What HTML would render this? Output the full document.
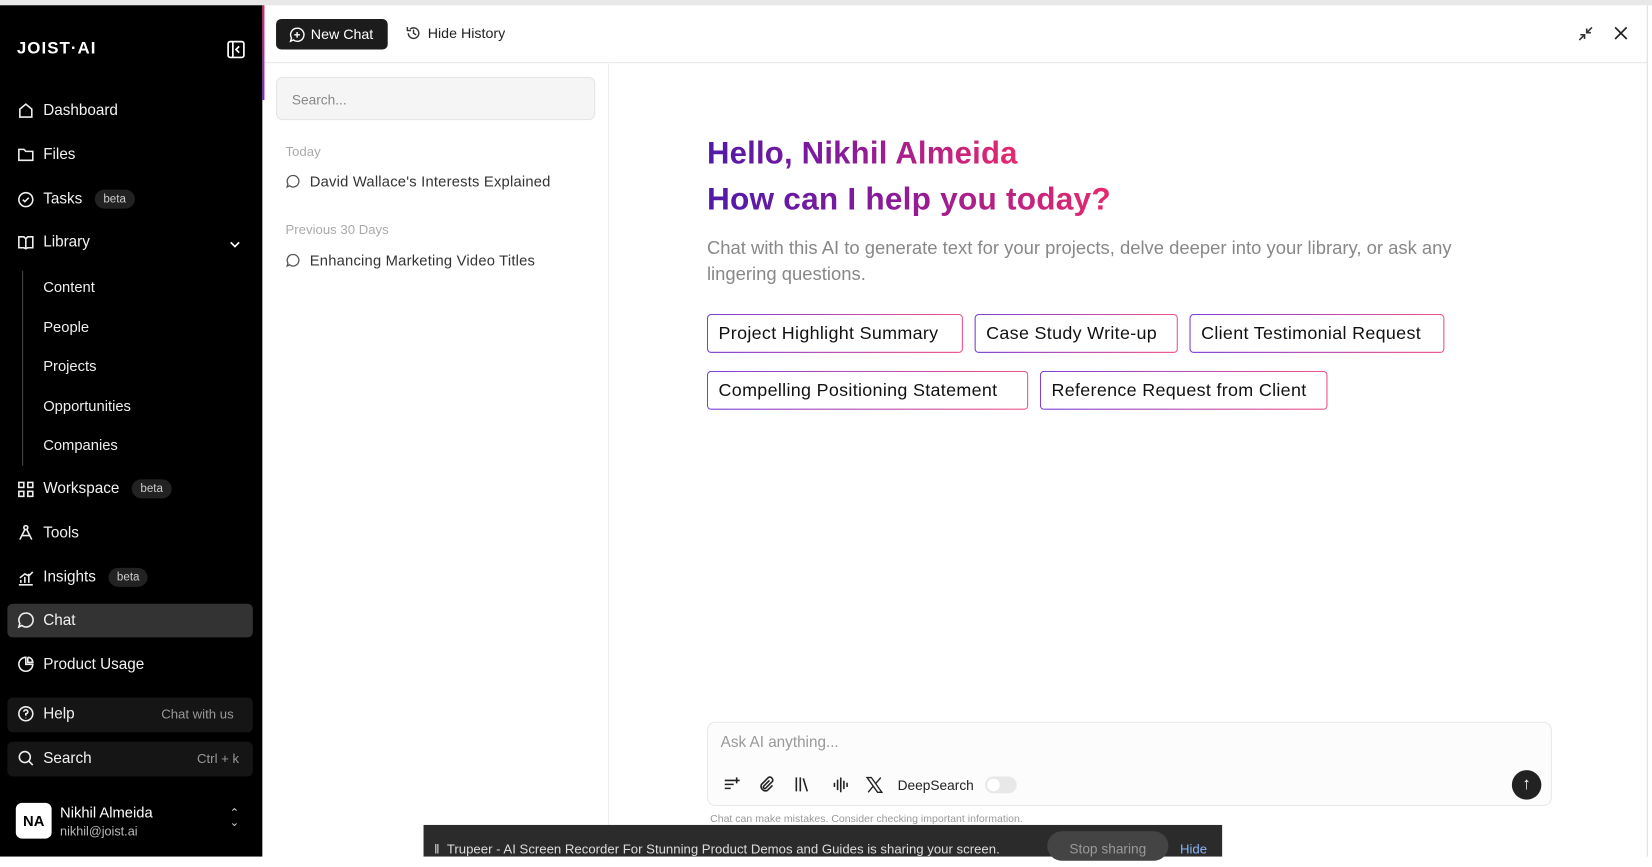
<!DOCTYPE html>
<html><head><meta charset="utf-8"><style>
*{box-sizing:border-box;margin:0;padding:0}
html,body{width:1652px;height:856px;overflow:hidden;background:#fff;font-family:"Liberation Sans",sans-serif}
#w{position:absolute;left:0;top:0;width:1568px;height:813px;transform:scale(1.05357);transform-origin:0 0;background:#fff}
.a{position:absolute}
.sb{left:0;top:5px;width:249px;height:808px;background:#000;color:#fff}
.ni{position:absolute;left:16px;font-size:14.5px;display:flex;align-items:center;gap:8px;color:#f2f2f2}
.ni svg{width:17px;height:17px;stroke:#eee;fill:none;stroke-width:1.6}
.beta{background:#222;color:#ccc;font-size:11px;border-radius:10px;padding:3px 8px;margin-left:4px}
.sub{position:absolute;left:41px;font-size:14px;color:#eee}
.chip{position:absolute;height:37px;border:1.5px solid transparent;background:linear-gradient(#fff,#fff) padding-box,linear-gradient(90deg,#7a3fd6,#f0528a) border-box;font-size:17px;letter-spacing:0.3px;color:#111;display:flex;align-items:center;padding-left:10px;border-radius:4px}
.gt{background:linear-gradient(90deg,#4f1aa8,#8a1a9a 45%,#e8286c);-webkit-background-clip:text;background-clip:text;color:transparent;font-weight:bold;font-size:29.5px;letter-spacing:0.2px}
</style></head><body><div id="w">
<div class="a" style="left:0;top:0;width:1568px;height:5px;background:#e8e8e8"></div>
<div class="a sb">
 <div class="a" style="left:16px;top:33px;font-size:16px;font-weight:bold;letter-spacing:1px">JOIST·AI</div>
 <svg class="a" style="left:215px;top:33px" width="18" height="18" viewBox="0 0 18 18" fill="none" stroke="#fff" stroke-width="1.6"><rect x="1.5" y="1.5" width="15" height="15" rx="2"/><path d="M6 2v14M12 6l-3 3 3 3"/></svg>
 <div class="ni" style="top:91px"><svg viewBox="0 0 18 18"><path d="M3 8l6-5 6 5v8H3z"/></svg>Dashboard</div>
 <div class="ni" style="top:133px"><svg viewBox="0 0 18 18"><path d="M2 4h5l2 2h7v9H2z"/></svg>Files</div>
 <div class="ni" style="top:175px"><svg viewBox="0 0 18 18"><circle cx="9" cy="9" r="7"/><path d="M6 9l2 2 4-4"/></svg>Tasks<span class="beta">beta</span></div>
 <div class="ni" style="top:216px"><svg viewBox="0 0 18 18"><path d="M2 4h5l2 2 2-2h5v11h-5l-2 1-2-1H2z M9 6v10"/></svg>Library</div>
 <svg class="a" style="left:217px;top:221px" width="12" height="12" viewBox="0 0 12 12" fill="none" stroke="#fff" stroke-width="1.6"><path d="M2 4l4 4 4-4"/></svg>
 <div class="a" style="left:21px;top:252px;width:1px;height:185px;background:#444"></div>
 <div class="sub" style="top:259px">Content</div>
 <div class="sub" style="top:297px">People</div>
 <div class="sub" style="top:334px">Projects</div>
 <div class="sub" style="top:372px">Opportunities</div>
 <div class="sub" style="top:409px">Companies</div>
 <div class="ni" style="top:450px"><svg viewBox="0 0 18 18"><rect x="2" y="2" width="5" height="5"/><rect x="11" y="2" width="5" height="5"/><rect x="2" y="11" width="5" height="5"/><rect x="11" y="11" width="5" height="5"/></svg>Workspace<span class="beta">beta</span></div>
 <div class="ni" style="top:492px"><svg viewBox="0 0 18 18"><circle cx="9" cy="4" r="2"/><path d="M8 6l-5 10M10 6l5 10M5 12h8"/></svg>Tools</div>
 <div class="ni" style="top:534px"><svg viewBox="0 0 18 18"><path d="M2 16h14M4 14v-3M8 14V8M12 14V5M3 9l5-4 4 2 4-4"/></svg>Insights<span class="beta">beta</span></div>
 <div class="a" style="left:7px;top:568px;width:233px;height:32px;background:#333;border-radius:5px"></div>
 <div class="ni" style="top:575px"><svg viewBox="0 0 18 18"><path d="M9 2a7 7 0 1 1-4 12.5L2 16l1-3.5A7 7 0 0 1 9 2z"/></svg>Chat</div>
 <div class="ni" style="top:617px"><svg viewBox="0 0 18 18"><path d="M9 2a7 7 0 1 0 7 7H9z M11 2v5h5a5 5 0 0 0-5-5"/></svg>Product Usage</div>
 <div class="a" style="left:7px;top:657px;width:233px;height:33px;background:#151515;border-radius:5px"></div>
 <div class="ni" style="top:664px"><svg viewBox="0 0 18 18"><circle cx="9" cy="9" r="7"/><path d="M7 7a2 2 0 1 1 2 2v2M9 13v.5"/></svg>Help</div>
 <div class="a" style="left:153px;top:666px;font-size:12.5px;color:#999">Chat with us</div>
 <div class="a" style="left:7px;top:699px;width:233px;height:33px;background:#151515;border-radius:5px"></div>
 <div class="ni" style="top:706px"><svg viewBox="0 0 18 18"><circle cx="8" cy="8" r="5.5"/><path d="M12 12l4 4"/></svg>Search</div>
 <div class="a" style="left:187px;top:708px;font-size:12.5px;color:#999">Ctrl + k</div>
 <div class="a" style="left:15px;top:757px;width:34px;height:34px;background:#fff;border-radius:6px;color:#000;font-size:14px;font-weight:bold;display:flex;align-items:center;justify-content:center">NA</div>
 <div class="a" style="left:57px;top:758px;font-size:14px">Nikhil Almeida</div>
 <div class="a" style="left:57px;top:777px;font-size:12px;color:#bbb">nikhil@joist.ai</div>
 <div class="a" style="left:218px;top:763px;font-size:11px;line-height:9px;color:#ccc">⌃<br>⌄</div>
</div>
<div class="a" style="left:249px;top:5px;width:2px;height:90px;background:linear-gradient(#e0246c,#7a2fd0)"></div>
<div class="a" style="left:251px;top:59px;width:1312px;height:1px;background:#e6e6e6"></div>
<div class="a" style="left:1563px;top:5px;width:1px;height:808px;background:#ddd"></div>
<div class="a" style="left:262px;top:18px;width:106px;height:29px;background:#1c1c1c;border-radius:5px;color:#fff;font-size:13.5px;display:flex;align-items:center;padding-left:12px;gap:5px"><svg width="16" height="16" viewBox="0 0 18 18" fill="none" stroke="#fff" stroke-width="1.5"><path d="M9 2a7 7 0 1 1-4 12.5L2 16l1-3.5A7 7 0 0 1 9 2zM9 6v6M6 9h6"/></svg>New Chat</div>
<div class="a" style="left:385px;top:24px;font-size:13.5px;color:#222;display:flex;gap:6px;align-items:center"><svg width="15" height="15" viewBox="0 0 18 18" fill="none" stroke="#333" stroke-width="1.6"><path d="M3 9a6 6 0 1 0 2-4.5M2 2v4h4M9 5v4l3 2"/></svg>Hide History</div>
<svg class="a" style="left:1497px;top:24px" width="16" height="16" viewBox="0 0 16 16" fill="none" stroke="#333" stroke-width="1.5"><path d="M2 14l5-5M3 9h4v4M14 2l-5 5M9 3v4h4"/></svg>
<svg class="a" style="left:1532px;top:25px" width="13" height="13" viewBox="0 0 13 13" fill="none" stroke="#222" stroke-width="1.6"><path d="M1 1l11 11M12 1L1 12"/></svg>
<div class="a" style="left:577px;top:60px;width:1px;height:753px;background:#eee"></div>
<div class="a" style="left:262px;top:73px;width:303px;height:41px;background:#f5f5f5;border:1px solid #e5e5e5;border-radius:6px;font-size:13px;color:#888;padding:13px 14px">Search...</div>
<div class="a" style="left:271px;top:137px;font-size:12.5px;color:#aaa">Today</div>
<div class="a" style="left:271px;top:164px;font-size:14px;color:#333;display:flex;gap:9px;align-items:center;letter-spacing:0.2px"><svg width="14" height="14" viewBox="0 0 18 18" fill="none" stroke="#555" stroke-width="1.6"><path d="M9 2a7 7 0 1 1-4 12.5L2 16l1-3.5A7 7 0 0 1 9 2z"/></svg>David Wallace's Interests Explained</div>
<div class="a" style="left:271px;top:211px;font-size:12.5px;color:#aaa">Previous 30 Days</div>
<div class="a" style="left:271px;top:239px;font-size:14px;color:#333;display:flex;gap:9px;align-items:center;letter-spacing:0.2px"><svg width="14" height="14" viewBox="0 0 18 18" fill="none" stroke="#555" stroke-width="1.6"><path d="M9 2a7 7 0 1 1-4 12.5L2 16l1-3.5A7 7 0 0 1 9 2z"/></svg>Enhancing Marketing Video Titles</div>
<div class="a gt" style="left:671px;top:129px">Hello, Nikhil Almeida</div>
<div class="a gt" style="left:671px;top:173px;font-size:30px">How can I help you today?</div>
<div class="a" style="left:671px;top:223px;width:730px;font-size:17.5px;line-height:25px;color:#888">Chat with this AI to generate text for your projects, delve deeper into your library, or ask any lingering questions.</div>
<div class="chip" style="left:671px;top:298px;width:243px">Project Highlight Summary</div>
<div class="chip" style="left:925px;top:298px;width:193px">Case Study Write-up</div>
<div class="chip" style="left:1129px;top:298px;width:242px">Client Testimonial Request</div>
<div class="chip" style="left:671px;top:352px;width:305px">Compelling Positioning Statement</div>
<div class="chip" style="left:987px;top:352px;width:273px">Reference Request from Client</div>
<div class="a" style="left:671px;top:685px;width:802px;height:80px;border:1px solid #e8e8e8;border-radius:8px;background:#fcfcfc"></div>
<div class="a" style="left:684px;top:697px;font-size:14.5px;color:#999">Ask AI anything...</div>
<svg class="a" style="left:686px;top:736px" width="17" height="17" viewBox="0 0 18 18" fill="none" stroke="#222" stroke-width="1.6"><path d="M2 5h9M2 9h9M2 13h6M14 2v6M11 5h6"/></svg>
<svg class="a" style="left:719px;top:736px" width="17" height="17" viewBox="0 0 18 18" fill="none" stroke="#222" stroke-width="1.6"><path d="M12 5l-6 6a1.5 1.5 0 0 0 2 2l7-7a3 3 0 0 0-4-4L4 9a4.5 4.5 0 0 0 6 6l5-5"/></svg>
<svg class="a" style="left:753px;top:736px" width="17" height="17" viewBox="0 0 18 18" fill="none" stroke="#222" stroke-width="1.6"><path d="M3 2v14M7 2v14M10 3l4 13"/></svg>
<svg class="a" style="left:789px;top:736px" width="18" height="18" viewBox="0 0 18 18" fill="none" stroke="#222" stroke-width="1.5"><path d="M3 7v4M6 4v10M9 2v14M12 5v8M15 7v4"/></svg>
<svg class="a" style="left:822px;top:737px" width="16" height="16" viewBox="0 0 16 16" fill="none" stroke="#222" stroke-width="1.3"><path d="M1 1h4l10 14h-4zM14 1L9 7M2 15l5-6"/></svg>
<div class="a" style="left:852px;top:738px;font-size:13px;color:#222">DeepSearch</div>
<div class="a" style="left:935px;top:737px;width:30px;height:16px;border-radius:8px;background:#e8e8e8"><div style="margin:2px;width:12px;height:12px;border-radius:6px;background:#fff"></div></div>
<div class="a" style="left:1435px;top:731px;width:28px;height:28px;border-radius:14px;background:#222;color:#fff;font-size:16px;text-align:center;line-height:28px">↑</div>
<div class="a" style="left:674px;top:772px;font-size:10px;color:#999">Chat can make mistakes. Consider checking important information.</div>
<div class="a" style="left:402px;top:783px;width:758px;height:30px;background:#2b2b2b"></div>
<div class="a" style="left:412px;top:799px;font-size:12.5px;color:#ddd">‖ &nbsp;Trupeer - AI Screen Recorder For Stunning Product Demos and Guides is sharing your screen.</div>
<div class="a" style="left:994px;top:789px;width:115px;height:28px;border-radius:14px;background:#444;color:#999;font-size:13px;text-align:center;line-height:34px">Stop sharing</div>
<div class="a" style="left:1120px;top:799px;font-size:12.5px;color:#8ab4f8">Hide</div>
</div></body></html>
